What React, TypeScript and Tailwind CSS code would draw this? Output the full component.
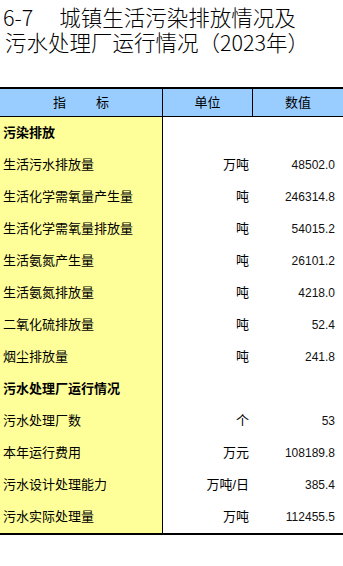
import React from 'react';

const ROWS: { label: string; unit?: string; value?: string; bold?: boolean }[] = [
  { label: '污染排放', bold: true },
  { label: '生活污水排放量', unit: '万吨', value: '48502.0' },
  { label: '生活化学需氧量产生量', unit: '吨', value: '246314.8' },
  { label: '生活化学需氧量排放量', unit: '吨', value: '54015.2' },
  { label: '生活氨氮产生量', unit: '吨', value: '26101.2' },
  { label: '生活氨氮排放量', unit: '吨', value: '4218.0' },
  { label: '二氧化硫排放量', unit: '吨', value: '52.4' },
  { label: '烟尘排放量', unit: '吨', value: '241.8' },
  { label: '污水处理厂运行情况', bold: true },
  { label: '污水处理厂数', unit: '个', value: '53' },
  { label: '本年运行费用', unit: '万元', value: '108189.8' },
  { label: '污水设计处理能力', unit: '万吨/日', value: '385.4' },
  { label: '污水实际处理量', unit: '万吨', value: '112455.5' },
];

const font = "font-['Liberation_Sans','Noto_Sans_CJK_SC',sans-serif]";

export default function App() {
  return (
    <div className={`w-[343px] h-[566px] bg-white text-black ${font}`}>
      {/* Title */}
      <div className="pt-[4px] pl-[3px] text-[21.5px] leading-[25px] font-light font-['Noto_Sans_CJK_SC',sans-serif]">
        <div>
          <span className="mr-[26px]">6-7</span>城镇生活污染排放情况及
        </div>
        <div className="pl-[2px]">污水处理厂运行情况（2023年）</div>
      </div>

      {/* Table */}
      <div className="mt-[33px] border-t-2 border-b-2 border-black">
        <div className="grid grid-cols-[163px_90px_1fr] h-[28px] bg-[#99ccff] border-b border-black text-[13px]">
          <div className="flex items-center justify-center gap-[30px] border-r border-black">
            <span>指</span>
            <span>标</span>
          </div>
          <div className="flex items-center justify-center border-r border-black">单位</div>
          <div className="flex items-center justify-center">数值</div>
        </div>

        {ROWS.map((r) => (
          <div key={r.label} className="grid grid-cols-[163px_90px_1fr] h-[32px]">
            <div
              className={`flex items-center pl-[3px] bg-[#ffff99] border-r border-black text-[13px] ${
                r.bold ? 'font-bold' : ''
              }`}
            >
              {r.label}
            </div>
            <div className="flex items-center justify-end pr-[4px] text-[13px]">{r.unit}</div>
            <div className="flex items-center justify-end pr-[8px] text-[12px] text-[#111]">{r.value}</div>
          </div>
        ))}
      </div>
    </div>
  );
}
